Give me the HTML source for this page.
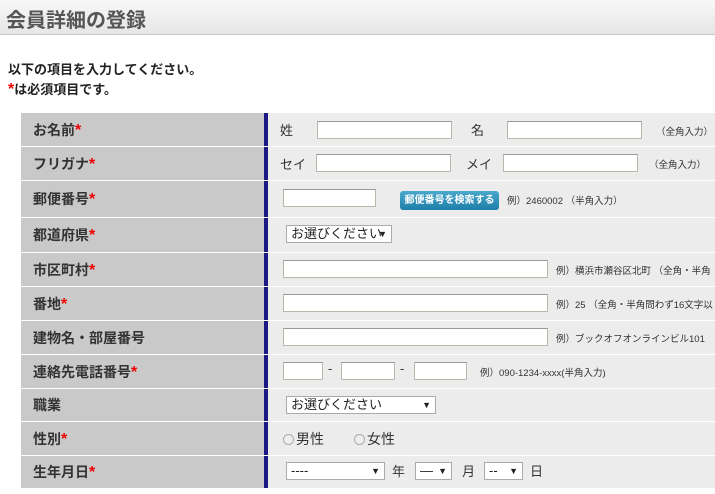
<!DOCTYPE html>
<html><head><meta charset="utf-8"><style>
*{margin:0;padding:0;box-sizing:border-box}
body{width:715px;height:494px;overflow:hidden;background:#fff;font-family:"Liberation Sans","Noto Sans CJK JP",sans-serif;color:#333;position:relative}
.hd{position:absolute;left:0;top:0;width:715px;height:35px;background:linear-gradient(#f8f8f8,#e6e6e6);border-bottom:1px solid #c8c8c8}
.hd h1{position:absolute;left:6px;top:4px;font-size:20px;font-weight:bold;color:#555;letter-spacing:0}
.intro{position:absolute;left:8px;font-size:13px;font-weight:bold;color:#222}
.r{color:#e00;font-size:16px;line-height:10px}
.row{position:absolute;left:21px;width:694px}
.lb{position:absolute;left:0;top:0;bottom:0;width:243px;background:#c9c9c9}
.lb span{position:absolute;left:12px;top:50%;transform:translateY(-50%);font-size:14px;font-weight:bold;color:#333;white-space:nowrap}
.bar{position:absolute;left:243px;top:0;bottom:0;width:4px;background:#1a1a85}
.vl{position:absolute;left:247px;right:0;top:0;bottom:0;background:#ececec}
.a{position:absolute;white-space:nowrap;font-size:13px;color:#333}
.in{position:absolute;height:18px;background:#fff;border:1px solid #b8b8aa;border-top-color:#999}
.s{font-size:9.5px;color:#333}
.sel{position:absolute;height:18px;background:#fff;border:1px solid #aaa;font-size:13px;padding-left:4px;line-height:16px;color:#222}
.sel i{position:absolute;right:4px;top:0;font-style:normal;font-size:9px}
.btn{position:absolute;background:linear-gradient(#4aa8cc,#1d7ea8);color:#fff;font-size:10px;font-weight:bold;border-radius:3px;text-align:center;line-height:19px}
.rd{display:inline-block;width:11px;height:11px;border-radius:50%;border:1px solid #aaa;background:#eee;vertical-align:-1px;margin-right:2px}
</style></head><body>
<div class="hd"><h1>会員詳細の登録</h1></div>
<div class="intro" style="top:59px">以下の項目を入力してください。</div>
<div class="intro" style="top:79px"><span class="r">*</span>は必須項目です。</div>

<div class="row" style="top:113px;height:33px"><div class="lb"><span>お名前<b class="r">*</b></span></div><div class="bar"></div><div class="vl">
<div class="a" style="left:12px;top:7px">姓</div><div class="in" style="left:49px;top:8px;width:135px"></div>
<div class="a" style="left:203px;top:7px">名</div><div class="in" style="left:239px;top:8px;width:135px"></div>
<div class="a s" style="left:388px;top:11px">（全角入力）</div></div></div>

<div class="row" style="top:147px;height:33px"><div class="lb"><span>フリガナ<b class="r">*</b></span></div><div class="bar"></div><div class="vl">
<div class="a" style="left:12px;top:7px">セイ</div><div class="in" style="left:48px;top:7px;width:135px"></div>
<div class="a" style="left:198px;top:7px">メイ</div><div class="in" style="left:235px;top:7px;width:135px"></div>
<div class="a s" style="left:381px;top:10px">（全角入力）</div></div></div>

<div class="row" style="top:181px;height:36px"><div class="lb"><span>郵便番号<b class="r">*</b></span></div><div class="bar"></div><div class="vl">
<div class="in" style="left:15px;top:8px;width:93px"></div>
<div class="btn" style="left:132px;top:10px;width:99px;height:19px">郵便番号を検索する</div>
<div class="a s" style="left:239px;top:12px">例）2460002 （半角入力）</div></div></div>

<div class="row" style="top:218px;height:34px"><div class="lb"><span>都道府県<b class="r">*</b></span></div><div class="bar"></div><div class="vl">
<div class="sel" style="left:18px;top:7px;width:106px">お選びください<i>▼</i></div></div></div>

<div class="row" style="top:253px;height:33px"><div class="lb"><span>市区町村<b class="r">*</b></span></div><div class="bar"></div><div class="vl">
<div class="in" style="left:15px;top:7px;width:265px"></div>
<div class="a s" style="left:288px;top:10px">例）横浜市瀬谷区北町 （全角・半角</div></div></div>

<div class="row" style="top:287px;height:33px"><div class="lb"><span>番地<b class="r">*</b></span></div><div class="bar"></div><div class="vl">
<div class="in" style="left:15px;top:7px;width:265px"></div>
<div class="a s" style="left:288px;top:10px">例）25 （全角・半角問わず16文字以</div></div></div>

<div class="row" style="top:321px;height:33px"><div class="lb"><span>建物名・部屋番号</span></div><div class="bar"></div><div class="vl">
<div class="in" style="left:15px;top:7px;width:265px"></div>
<div class="a s" style="left:288px;top:10px">例）ブックオフオンラインビル101</div></div></div>

<div class="row" style="top:355px;height:33px"><div class="lb"><span>連絡先電話番号<b class="r">*</b></span></div><div class="bar"></div><div class="vl">
<div class="in" style="left:15px;top:7px;width:40px"></div><div class="a" style="left:60px;top:6px">-</div>
<div class="in" style="left:73px;top:7px;width:54px"></div><div class="a" style="left:132px;top:6px">-</div>
<div class="in" style="left:146px;top:7px;width:53px"></div>
<div class="a s" style="left:212px;top:10px">例）090-1234-xxxx(半角入力)</div></div></div>

<div class="row" style="top:389px;height:32px"><div class="lb"><span>職業</span></div><div class="bar"></div><div class="vl">
<div class="sel" style="left:18px;top:7px;width:150px">お選びください<i>▼</i></div></div></div>

<div class="row" style="top:422px;height:33px"><div class="lb"><span>性別<b class="r">*</b></span></div><div class="bar"></div><div class="vl">
<div class="a" style="left:15px;top:7px;font-size:14px"><span class="rd"></span>男性</div>
<div class="a" style="left:86px;top:7px;font-size:14px"><span class="rd"></span>女性</div></div></div>

<div class="row" style="top:456px;height:32px"><div class="lb"><span>生年月日<b class="r">*</b></span></div><div class="bar"></div><div class="vl">
<div class="sel" style="left:18px;top:6px;width:99px">----<i>▼</i></div><div class="a" style="left:124px;top:5px">年</div>
<div class="sel" style="left:147px;top:6px;width:37px">—<i>▼</i></div><div class="a" style="left:194px;top:5px">月</div>
<div class="sel" style="left:216px;top:6px;width:39px">--<i>▼</i></div><div class="a" style="left:262px;top:5px">日</div></div></div>
</body></html>
